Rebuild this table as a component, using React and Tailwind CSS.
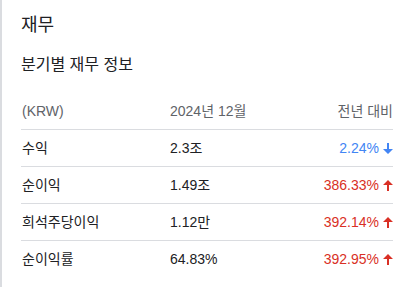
import React from 'react';

const rows = [
  { label: '수익', value: '2.3조', change: '2.24%', up: false },
  { label: '순이익', value: '1.49조', change: '386.33%', up: true },
  { label: '희석주당이익', value: '1.12만', change: '392.14%', up: true },
  { label: '순이익률', value: '64.83%', change: '392.95%', up: true },
];

// filled arrow: triangle head + thin shaft
const Arrow = ({ up, className }) => (
  <svg viewBox="0 0 10 11" className={className} fill="currentColor">
    {up ? (
      <polygon points="5,0 10,5 6,5 6,11 4,11 4,5 0,5" />
    ) : (
      <polygon points="5,11 10,6 6,6 6,0 4,0 4,6 0,6" />
    )}
  </svg>
);

export default function App() {
  return (
    <div
      className="w-[407px] h-[287px] overflow-hidden bg-white border-l-2 border-[#dadce0] pl-[19px] pr-[14px] text-[#202124]"
      style={{ fontFamily: '"Liberation Sans", "Noto Sans CJK KR", sans-serif' }}
    >
      <h2 className="pt-[13px] text-[18px] leading-[24px]">재무</h2>
      <h3 className="mt-[16px] text-[16px] leading-[24px]">분기별 재무 정보</h3>

      <div className="mt-[16px] text-[14px]">
        <div className="flex items-center h-[37px] border-b border-[#dadce0] text-[#5f6368] pl-[1px]">
          <div className="w-[148px]">(KRW)</div>
          <div className="flex-1">2024년 12월</div>
          <div className="text-right">전년 대비</div>
        </div>
        {rows.map((r, i) => (
          <div
            key={r.label}
            className={`flex items-center h-[37px] pl-[1px] ${i < rows.length - 1 ? 'border-b border-[#dadce0]' : ''}`}
          >
            <div className="w-[148px]">{r.label}</div>
            <div className="flex-1">{r.value}</div>
            <div
              className={`flex items-center gap-[4px] ${r.up ? 'text-[#d93025]' : 'text-[#4285f4]'}`}
            >
              <span>{r.change}</span>
              <Arrow up={r.up} className="w-[10px] h-[11px]" />
            </div>
          </div>
        ))}
      </div>
    </div>
  );
}
